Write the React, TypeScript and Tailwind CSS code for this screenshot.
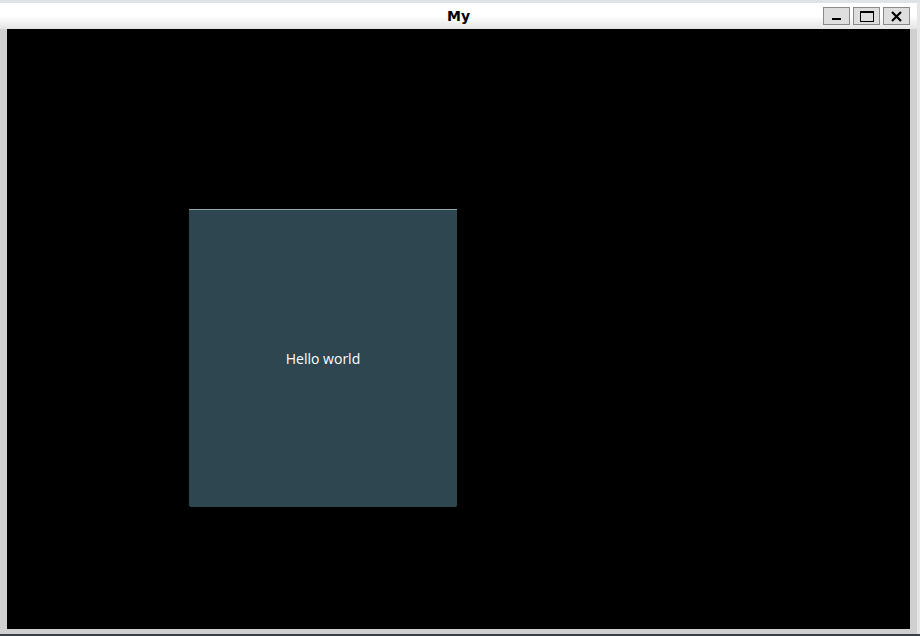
import React from "react";

export default function App() {
  return (
    <div className="w-[920px] h-[636px] flex flex-col bg-[#c9ced4] overflow-hidden">
      <div className="h-[3px] bg-[#dfe3e8]" />
      <div className="flex-1 flex">
        <div className="w-[917px] flex flex-col bg-[#d0d0d0]">
          <div className="h-[26px] relative flex items-center justify-center bg-gradient-to-b from-white via-white to-[#e4e4e4]">
            <span
              className="text-[14px] font-bold text-black leading-none"
              style={{ fontFamily: '"DejaVu Sans", sans-serif' }}
            >
              My
            </span>
            <div className="absolute right-[7px] top-[4px] flex gap-[3px]">
              <div className="w-[27px] h-[18px] border border-[#8a8a8a] bg-[#dedede] flex items-end justify-center pb-[4px]">
                <div className="w-[9px] h-[2px] bg-black" />
              </div>
              <div className="w-[27px] h-[18px] border border-[#8a8a8a] bg-[#dedede] flex items-center justify-center">
                <div className="w-[14px] h-[11px] border border-black border-t-[2px]" />
              </div>
              <div className="w-[27px] h-[18px] border border-[#8a8a8a] bg-[#dedede] flex items-center justify-center">
                <svg width="11" height="11" viewBox="0 0 11 11">
                  <path d="M1 1 L10 10 M10 1 L1 10" stroke="black" strokeWidth="2.2" />
                </svg>
              </div>
            </div>
          </div>
          <div className="flex-1 px-[7px] pb-[5px] flex flex-col">
            <div className="h-[600px] bg-black pl-[182px] pt-[180px]">
              <div className="w-[268px] h-[298px] bg-[#2e4650] border-t border-t-[#8fa3aa] rounded-b-[2px] flex items-center justify-center">
                <span
                  className="text-[14px] text-white"
                  style={{ fontFamily: '"Open Sans", sans-serif' }}
                >
                  Hello world
                </span>
              </div>
            </div>
          </div>
        </div>
        <div className="flex-1 bg-[#e4e6e8]" />
      </div>
      <div className="h-[2px] bg-[#3a4048]" />
    </div>
  );
}
